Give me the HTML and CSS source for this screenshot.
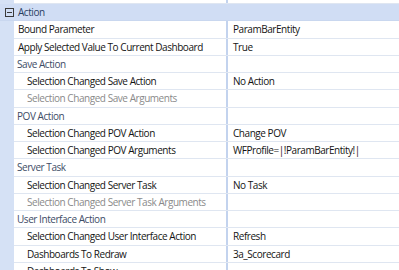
FILE: index.html
```html
<!DOCTYPE html>
<html>
<head>
<meta charset="utf-8">
<link rel="stylesheet" href="styles.css">
</head>
<body>
<div class="viewport">
  <div class="grid">
    <div class="row partial">
      <div class="name">Display Type</div>
      <div class="value">Single Selection Dropdown</div>
    </div>
    <div class="row header">
      <span class="toggle"><svg width="9" height="9" viewBox="0 0 9 9"><rect x="0.5" y="0.5" width="8" height="8" fill="none" stroke="#3a3a3a"/><line x1="2" y1="4.5" x2="7" y2="4.5" stroke="#3a3a3a"/></svg></span>
      <span class="htext">Action</span>
    </div>
    <div class="row">
      <div class="name">Bound Parameter</div>
      <div class="value">ParamBarEntity</div>
    </div>
    <div class="row">
      <div class="name">Apply Selected Value To Current Dashboard</div>
      <div class="value">True</div>
    </div>
    <div class="row">
      <div class="name cat">Save Action</div>
      <div class="value"></div>
    </div>
    <div class="row">
      <div class="name sub">Selection Changed Save Action</div>
      <div class="value">No Action</div>
    </div>
    <div class="row">
      <div class="name sub dis">Selection Changed Save Arguments</div>
      <div class="value"></div>
    </div>
    <div class="row">
      <div class="name cat">POV Action</div>
      <div class="value"></div>
    </div>
    <div class="row">
      <div class="name sub">Selection Changed POV Action</div>
      <div class="value">Change POV</div>
    </div>
    <div class="row">
      <div class="name sub">Selection Changed POV Arguments</div>
      <div class="value">WFProfile=|!ParamBarEntity!|</div>
    </div>
    <div class="row">
      <div class="name cat">Server Task</div>
      <div class="value"></div>
    </div>
    <div class="row">
      <div class="name sub">Selection Changed Server Task</div>
      <div class="value">No Task</div>
    </div>
    <div class="row">
      <div class="name sub dis">Selection Changed Server Task Arguments</div>
      <div class="value"></div>
    </div>
    <div class="row">
      <div class="name cat">User Interface Action</div>
      <div class="value"></div>
    </div>
    <div class="row">
      <div class="name sub">Selection Changed User Interface Action</div>
      <div class="value">Refresh</div>
    </div>
    <div class="row">
      <div class="name sub">Dashboards To Redraw</div>
      <div class="value">3a_Scorecard</div>
    </div>
    <div class="row">
      <div class="name sub">Dashboards To Show</div>
      <div class="value"></div>
    </div>
  </div>
</div>
</body>
</html>
```
FILE: styles.css
```css
html, body {
  margin: 0;
  padding: 0;
  background: #ffffff;
}
body {
  font-family: "Open Sans", "Noto Sans", sans-serif;
  font-size: 10px;
  letter-spacing: -0.45px;
  color: #141414;
}
.viewport {
  width: 399px;
  height: 270px;
  overflow: hidden;
  background: #d5e1f5;
}
.grid {
  margin-top: -13.25px;
  padding-left: 14px;
  background: #d5e1f5;
}
.row {
  display: flex;
  height: 17.25px;
  box-sizing: border-box;
  border-bottom: 1px solid #dfe6f1;
  background: #ffffff;
}
.name {
  width: 214px;
  flex: none;
  padding-left: 4px;
  border-right: 2px solid #c3d3ee;
  white-space: nowrap;
  overflow: hidden;
  line-height: 16px;
  box-sizing: border-box;
}
.value {
  flex: 1;
  padding-left: 5px;
  line-height: 16px;
  white-space: nowrap;
  overflow: hidden;
}
.partial .name,
.partial .value {
  line-height: 12px;
}
.sub {
  padding-left: 13px;
}
.cat {
  padding-left: 3px;
  color: #3e4c66;
}
.dis {
  color: #8a8a8a;
}
.header {
  margin-left: -14px;
  background: #d0ddf4;
  border-bottom: 1px solid #c9d7ef;
  align-items: center;
}
.toggle {
  width: 18px;
  display: flex;
  justify-content: center;
  padding-left: 1px;
  box-sizing: border-box;
  padding-top: 1px;
}
.toggle svg {
  display: block;
}
.htext {
  color: #2b3f63;
  line-height: 16px;
}
```
